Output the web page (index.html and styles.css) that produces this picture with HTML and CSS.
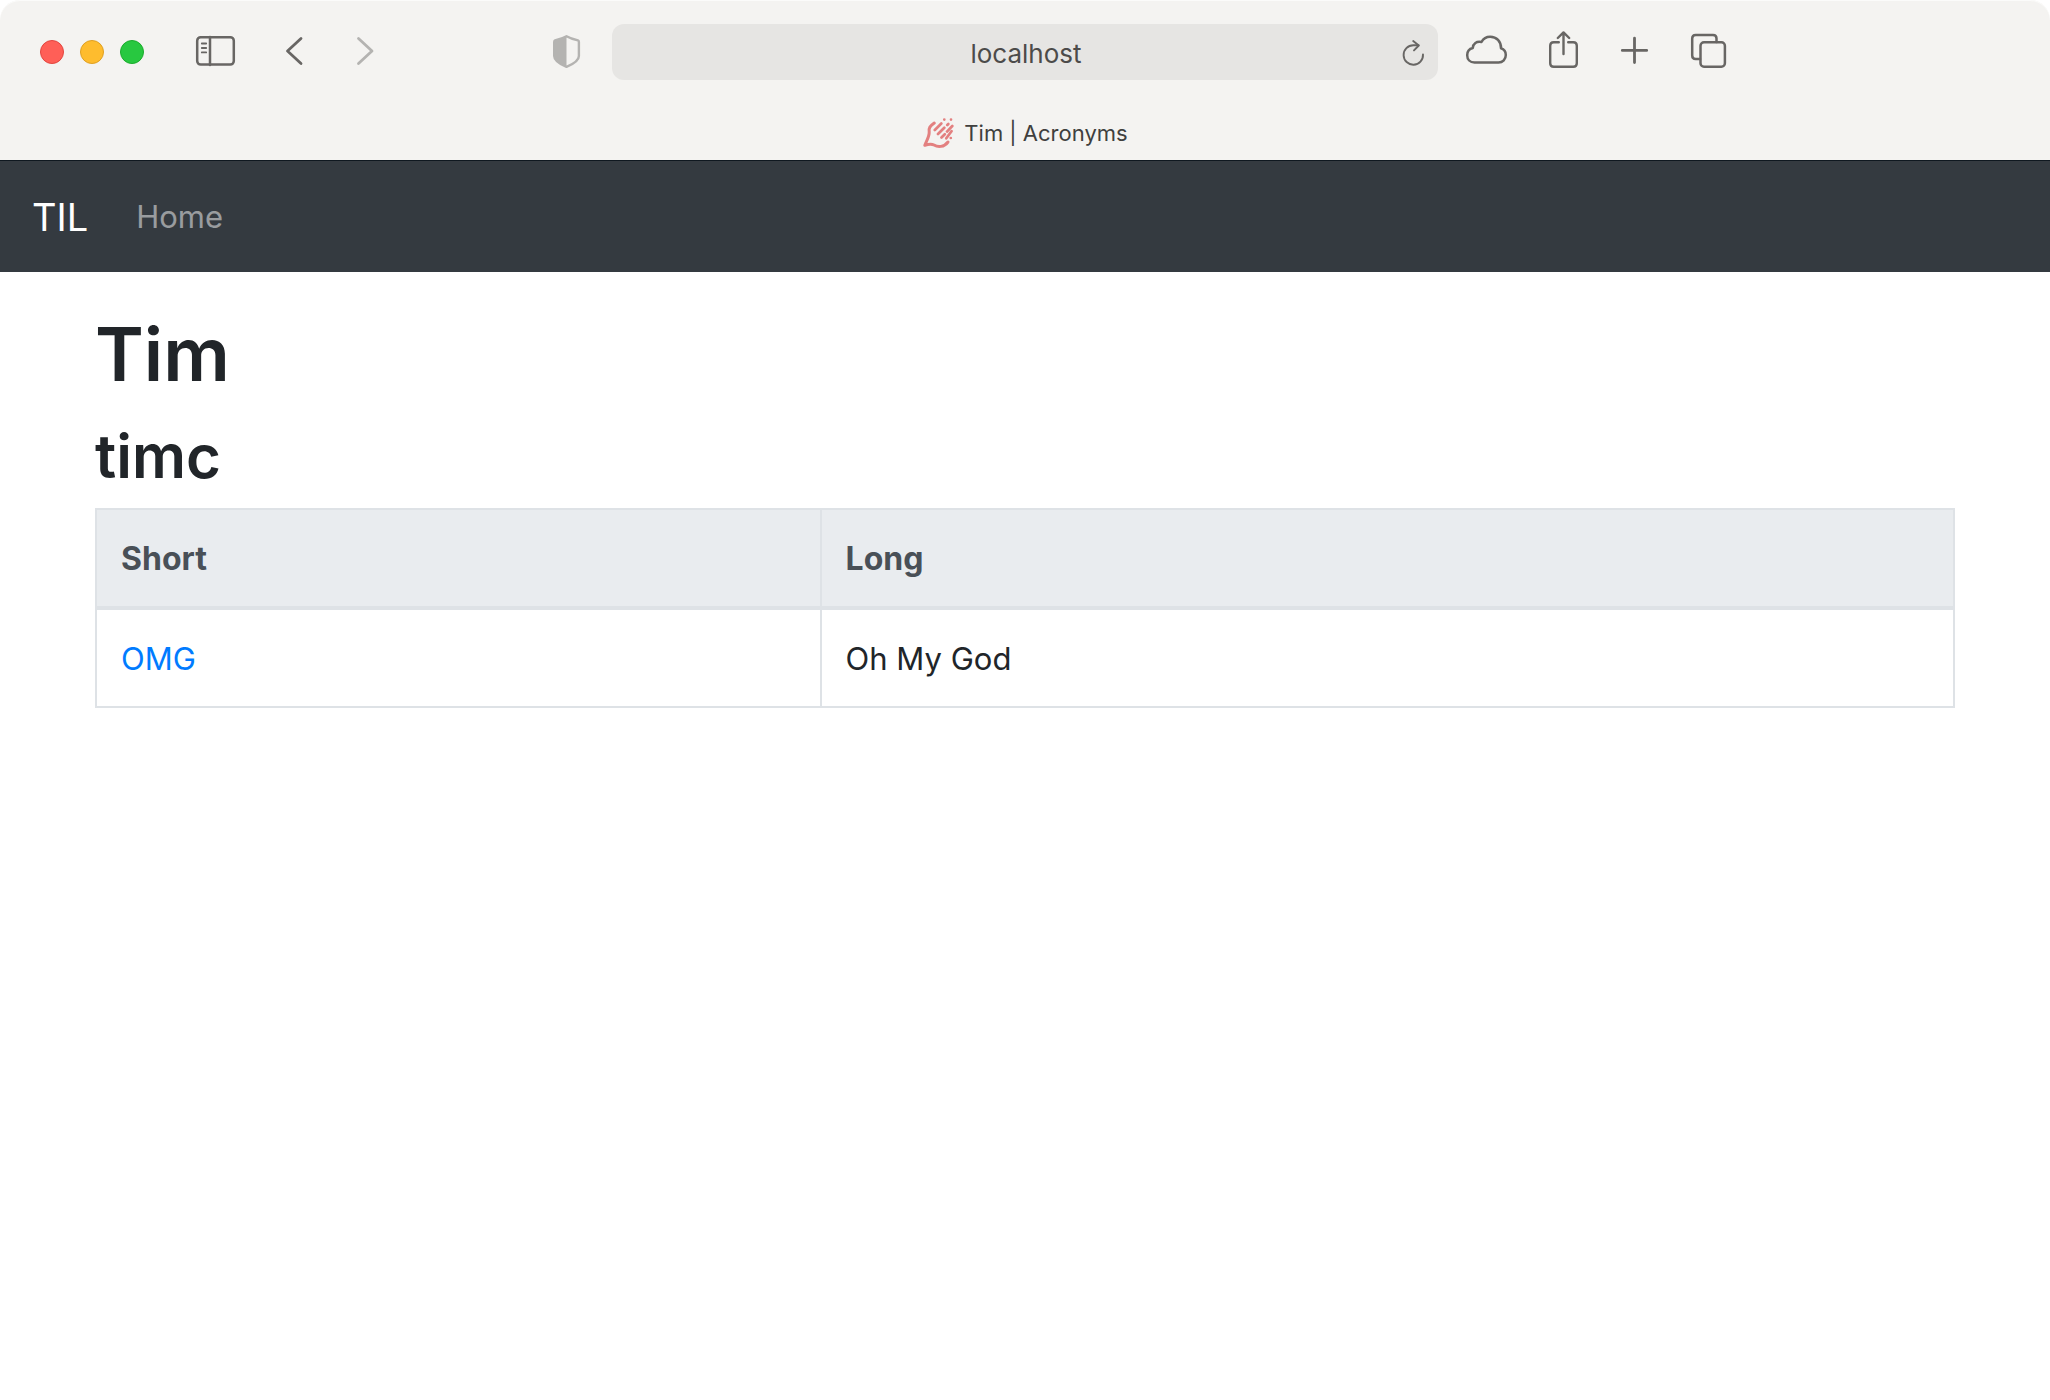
FILE: index.html
```html
<!DOCTYPE html>
<html lang="en">
<head>
<meta charset="utf-8">
<meta name="viewport" content="width=device-width, initial-scale=1">
<title>Tim | Acronyms</title>
<link rel="stylesheet" href="styles.css">
</head>
<body>
<header class="browser">
  <div class="toolbar">
    <div class="toolbar-side">
      <div class="lights">
        <button class="light light-close" aria-label="Close"></button>
        <button class="light light-minimize" aria-label="Minimize"></button>
        <button class="light light-zoom" aria-label="Zoom"></button>
      </div>
      <div class="tools">
        <button class="tool" aria-label="Sidebar">
          <svg viewBox="0 0 44 44" stroke-width="2.5"><rect x="3.2" y="7.2" width="36.6" height="27.4" rx="3.5"/><path d="M16 7v28"/><path stroke-width="1.8" d="M7.8 13.5h4.4M7.8 18h4.4M7.8 22.4h4.4"/></svg>
        </button>
        <button class="tool" aria-label="Back">
          <svg viewBox="0 0 44 44" stroke-width="2.8"><path d="M33 8.5L19.5 21L33 33.5"/></svg>
        </button>
        <button class="tool tool-muted" aria-label="Forward" disabled>
          <svg viewBox="0 0 44 44" stroke-width="2.8"><path d="M16.5 8.5L30 21L16.5 33.5"/></svg>
        </button>
      </div>
      <button class="tool tool-muted tool-privacy" aria-label="Privacy report">
        <svg viewBox="0 0 44 44" stroke-width="2.4"><path d="M22.5 6.2C26 8.2 30 9.4 34 10.4Q34.9 10.7 34.9 12V26C34.9 30 29.5 34 22.5 36.8C15.5 34 10.2 30 10.2 26V12Q10.2 10.7 11 10.4C15 9.4 19 8.2 22.5 6.2Z"/><path class="solid" d="M22.5 6.2V36.8C15.5 34 10.2 30 10.2 26V12Q10.2 10.7 11 10.4C15 9.4 19 8.2 22.5 6.2Z" stroke="none"/></svg>
      </button>
    </div>
    <div class="address">
      <input class="address-input" type="text" value="localhost" aria-label="Address">
      <button class="reload" aria-label="Reload">
        <svg viewBox="0 0 32 32" stroke-width="1.9"><path d="M26 18.5A9.7 9.7 0 1 1 16.3 9.3H21.5"/><path d="M16.2 5L21.8 9.5L17 14.4"/></svg>
      </button>
    </div>
    <div class="toolbar-side tools tools-end">
      <button class="tool" aria-label="iCloud tabs">
        <svg viewBox="0 0 44 44" stroke-width="2.5"><path d="M10.5 32.5C6 32.5 3.2 29.5 3.2 25.2C3.2 21.5 5.5 18.8 8.8 18C9 13.5 12.5 11 17.5 12C19.3 8.6 22.5 6.7 26.2 6.7C32.5 6.7 37.2 11.5 37 18.3C40 19.3 41.8 21.8 41.8 25C41.8 29.3 38.8 32.5 34.5 32.5Z"/></svg>
      </button>
      <button class="tool" aria-label="Share">
        <svg viewBox="0 0 44 44" stroke-width="2.4"><path d="M20.8 12.3H15.7Q12.2 12.3 12.2 15.8V33.3Q12.2 36.8 15.7 36.8H35.3Q38.8 36.8 38.8 33.3V15.8Q38.8 12.3 35.3 12.3H30.2"/><path d="M25.5 24V2.8M19.8 8L25.5 2.4L31.2 8"/></svg>
      </button>
      <button class="tool" aria-label="New tab">
        <svg viewBox="0 0 44 44" stroke-width="2.8"><path d="M22.5 8.2V32.6M10.3 20.4H34.7"/></svg>
      </button>
      <button class="tool" aria-label="Tab overview">
        <svg viewBox="0 0 44 44" stroke-width="2.5"><rect x="14.5" y="12.3" width="24.4" height="24.4" rx="3.5"/><path d="M14 28.9H9.7Q6.2 28.9 6.2 25.4V8.5Q6.2 5 9.7 5H27Q30.5 5 30.5 8.5V12"/></svg>
      </button>
    </div>
  </div>
  <div class="tab">
    <svg class="favicon" viewBox="0 0 32 32" stroke-width="2.7"><path stroke-width="3" d="M12.3 6C8 9 6.5 11 7.2 15C7.5 19 5 23 2.8 28.3C6 27.2 9 26.4 12 28C16 30.4 22 30.3 26 25"/><path d="M12.8 13L19.3 6.5M16 17L22.3 10.7M25.3 8L26.3 7M19.5 20.5L22.8 17.2M25 14.6L30.3 9M24.3 21.3L29.5 14.2M22.3 2.6h.01M29 2.6h.01M28.8 21h.01"/></svg>
    <span>Tim | Acronyms</span>
  </div>
</header>
<nav class="navbar">
  <a class="brand" href="#">TIL</a>
  <a class="nav-link" href="#">Home</a>
</nav>
<main class="container">
  <h1>Tim</h1>
  <h2>timc</h2>
  <table class="acronyms">
    <thead>
      <tr><th class="col-short" scope="col">Short</th><th scope="col">Long</th></tr>
    </thead>
    <tbody>
      <tr><td><a href="#">OMG</a></td><td>Oh My God</td></tr>
    </tbody>
  </table>
</main>
</body>
</html>
```
FILE: styles.css
```css
*, *::before, *::after { box-sizing: border-box; }

body {
  margin: 0;
  background: #fff;
  color: #212529;
  font-family: Inter, "Liberation Sans", sans-serif;
  font-size: 31px;
  line-height: 48px;
}

a { color: #007bff; text-decoration: none; }

button {
  margin: 0;
  padding: 0;
  border: 0;
  background: none;
  color: inherit;
}

svg {
  display: block;
  width: 100%;
  height: 100%;
  fill: none;
  stroke: currentColor;
  stroke-linecap: round;
  stroke-linejoin: round;
}

/* Browser window */
.browser {
  border-radius: 20px 20px 0 0;
  background: #f4f3f1;
  box-shadow: inset 0 1px #fbfbfa;
  color: #686664;
}

.toolbar {
  display: grid;
  grid-template-columns: 1fr 40.3% 1fr;
  align-items: center;
  height: 104px;
}

.toolbar-side {
  display: flex;
  align-items: center;
}

.lights {
  display: flex;
  gap: 16px;
  margin: 0 50px 0 40px;
}

.light {
  width: 24px;
  height: 24px;
  border: 1px solid;
  border-radius: 50%;
}

.light-close { background: #ff5f57; border-color: #e2463f; }
.light-minimize { background: #febc2e; border-color: #dfa023; }
.light-zoom { background: #28c840; border-color: #1bac2c; }

.tools { display: flex; gap: 30px; }
.tools-end { padding-left: 26px; }

.tool { width: 44px; height: 44px; }
.tool-muted { color: #b4b3b1; }
.tool-privacy { margin: 0 24px 0 auto; }
.solid { fill: currentColor; }

.address {
  display: flex;
  align-items: center;
  height: 56px;
  padding: 0 9px 0 43px;
  border-radius: 12px;
  background: #e6e5e3;
}

.address-input {
  flex: 1;
  min-width: 0;
  padding: 3px 0 0;
  border: 0;
  background: none;
  color: #4c4b4a;
  font: inherit;
  font-size: 26px;
  line-height: 32px;
  text-align: center;
}

.reload { width: 32px; height: 32px; }

.tab {
  display: flex;
  align-items: center;
  justify-content: center;
  gap: 10px;
  height: 56px;
  padding-top: 2px;
  color: #403f3e;
  font-size: 22px;
  line-height: 28px;
}

.favicon { width: 32px; height: 32px; color: #e38080; }

/* Page */
.navbar {
  display: flex;
  align-items: center;
  gap: 48px;
  height: 112px;
  padding: 0 32px;
  border-top: 1px solid #0f1820;
  background: #343a40;
}

.brand { color: #fff; font-size: 38px; }
.nav-link { color: rgba(255, 255, 255, 0.5); }

.container {
  max-width: 1920px;
  margin: 34px auto 0;
  padding: 0 30px;
}

h1, h2 { font-weight: 600; }
h1 { margin: 0 0 16px; font-size: 74px; line-height: 96px; }
h2 { margin: 0 0 14px; font-size: 60px; line-height: 76px; }

.acronyms {
  width: 100%;
  border-collapse: collapse;
}

.acronyms th,
.acronyms td {
  padding: 25px 24px 23px;
  border: 2px solid #dee2e6;
  text-align: left;
}

.acronyms th {
  border-bottom-width: 4px;
  background: #e9ecef;
  color: #495057;
  font-size: 32px;
  font-weight: 700;
}

.col-short { width: 39%; }
```
